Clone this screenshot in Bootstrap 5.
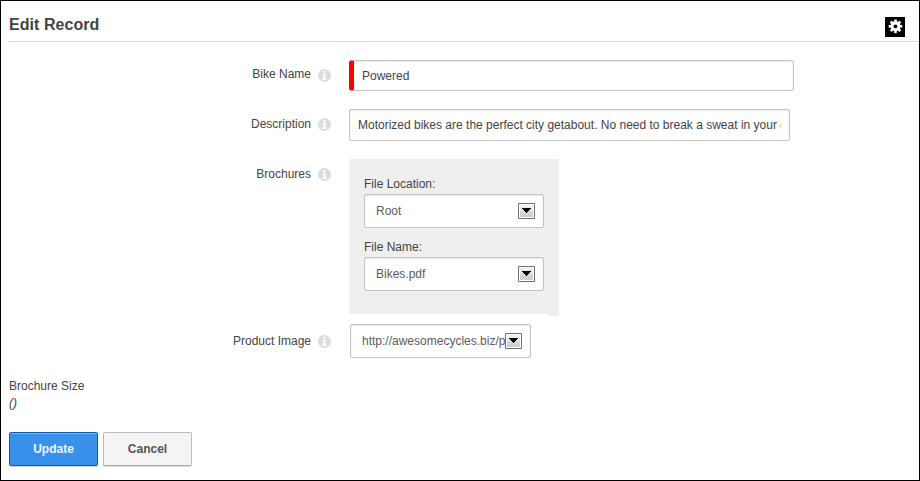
<!DOCTYPE html>
<html lang="en">
<head>
<meta charset="utf-8">
<meta name="viewport" content="width=device-width, initial-scale=1">
<title>Edit Record</title>
<link href="https://cdn.jsdelivr.net/npm/bootstrap@5.3.0/dist/css/bootstrap.min.css" rel="stylesheet">
<style>
body{font:12px/18px "Liberation Sans",Arial,sans-serif;color:#444;background:#fff}
.page-frame{width:920px;height:481px;border:1px solid #000;padding-left:8px;overflow:hidden}
.page-head{height:41px;border-bottom:1px solid #dcdcdc;padding-right:14px}
.page-head h1{font-size:16px;line-height:20px;font-weight:700;padding-top:14px;color:#444;letter-spacing:.05px}
.gear-btn{width:20px;height:20px;background:#000;border:0;margin-top:16px}
.field-label{width:302px;line-height:18px;padding-top:6px;text-align:right}
.first-row .field-label{padding-top:5px}
.image-row .field-label{padding-top:8px}
.info-dot{width:13px;height:13px;margin:9px 18px 0 7px;flex:none}
.image-row .info-dot{margin-top:11px}
.form-row{height:32px;margin-bottom:18px}
.form-row.first-row{margin-top:18px;height:31px}
.form-control.field-input{font-size:12px;line-height:18px;color:#444;border:1px solid #c4c4c4;border-radius:2px;height:32px;padding:0 8px;box-shadow:inset 0 1px 2px #e8e8e8}
.form-control.name-input{width:445px;height:31px;border-left:5px solid #f00;border-radius:3px}
.form-control.desc-input{width:441px}
.file-panel{width:210px;height:155px;background:#efefef;padding:16px 15px 0}
.file-name{margin-top:10px}
.panel-tail{width:11px;height:2px;background:#efefef;margin-left:199px}
.pick{width:180px;height:34px;background:#fff;border:1px solid #c4c4c4;border-radius:2px;padding:0 8px 0 11px;color:#5c5c5c;box-shadow:inset 0 1px 2px #e8e8e8}
.file-panel .pick{margin-top:1px}
.pick-text{flex:1;min-width:0;overflow:hidden;white-space:nowrap}
.pick-arrow{width:17px;height:16px;flex:none}
.image-pick{width:181px;margin-left:1px}
.size-block{padding-top:19px}
.size-block em{line-height:17px}
.actions{gap:5px;padding-top:20px}
.act-btn.btn{width:89px;height:34px;font-size:12px;font-weight:700;line-height:18px;padding:0;border-radius:2px}
.btn.update-btn{background:#3892ec;border:1px solid #16599f;color:#eef5fd;box-shadow:inset 0 1px #70b3f4,0 1px #d5d5d5}
.btn.cancel-btn{background:#f4f4f4;border:1px solid #bdbdbd;border-bottom-color:#a8a8a8;color:#555;box-shadow:0 1px #dedede}
</style>
<script src="https://cdn.jsdelivr.net/npm/bootstrap@5.3.0/dist/js/bootstrap.bundle.min.js"></script>
</head>
<body>
<svg class="position-absolute" width="0" height="0" aria-hidden="true">
  <defs><linearGradient id="face" x2="0" y2="1"><stop stop-color="#f2f2f2"/><stop offset=".5" stop-color="#e6e6e6"/><stop offset=".55" stop-color="#d6d6d6"/><stop offset="1" stop-color="#cecece"/></linearGradient></defs>
  <symbol id="info" viewBox="0 0 13 13"><circle cx="6.5" cy="6.5" r="6.5" fill="#dcdcdc"/><path fill="#fff" d="M5.4 2h2.2v2H5.4zM4.4 5h3.2v4.6h1V11H4.4V9.600h1V6.300h-1z"/></symbol>
  <symbol id="arrow" viewBox="0 0 17 16"><path fill="#fff" stroke="#707070" d="M.5.5h16v15H.5z"/><path fill="url(#face)" d="M2 2h13v12H2z"/><path d="M4 5h9v1h-1v1h-1v1h-1v1H9v1H8V9H7V8H6V7H5V6H4z"/></symbol>
</svg>
<main class="page-frame">
  <header class="page-head d-flex justify-content-between align-items-start">
    <h1 class="m-0">Edit Record</h1>
    <button class="gear-btn p-0 d-flex" type="button" aria-label="Settings">
      <svg width="20" height="20" viewBox="0 0 20 20"><g fill="#fff" transform="translate(10.5 9.300)"><circle r="5"/><path d="M-1.300-6.800h2.600v13.600h-2.600z"/><path d="M-1.300-6.800h2.600v13.600h-2.600z" transform="rotate(45)"/><path d="M-1.300-6.800h2.600v13.600h-2.600z" transform="rotate(90)"/><path d="M-1.300-6.800h2.600v13.600h-2.600z" transform="rotate(135)"/><circle r="1.900" fill="#000"/></g></svg>
    </button>
  </header>
  <form>
    <div class="form-row first-row d-flex align-items-start">
      <label class="field-label" for="bike">Bike Name</label><svg class="info-dot"><use href="#info"/></svg>
      <input id="bike" class="form-control field-input name-input" value="Powered">
    </div>
    <div class="form-row d-flex align-items-start">
      <label class="field-label" for="desc">Description</label><svg class="info-dot"><use href="#info"/></svg>
      <input id="desc" class="form-control field-input desc-input" value="Motorized bikes are the perfect city getabout. No need to break a sweat in your commute">
    </div>
    <div class="d-flex align-items-start mb-2">
      <span class="field-label">Brochures</span><svg class="info-dot"><use href="#info"/></svg>
      <div>
        <div class="file-panel">
          <div>File Location:</div>
          <div class="pick d-flex align-items-center"><span class="pick-text">Root</span><svg class="pick-arrow"><use href="#arrow"/></svg></div>
          <div class="file-name">File Name:</div>
          <div class="pick d-flex align-items-center"><span class="pick-text">Bikes.pdf</span><svg class="pick-arrow"><use href="#arrow"/></svg></div>
        </div>
        <div class="panel-tail"></div>
      </div>
    </div>
    <div class="d-flex align-items-start image-row">
      <span class="field-label">Product Image</span><svg class="info-dot"><use href="#info"/></svg>
      <div class="pick image-pick d-flex align-items-center"><span class="pick-text">http://awesomecycles.biz/p</span><svg class="pick-arrow"><use href="#arrow"/></svg></div>
    </div>
    <div class="size-block">
      <div>Brochure Size</div>
      <em class="d-block">()</em>
    </div>
    <div class="d-flex actions">
      <button type="button" class="btn act-btn update-btn">Update</button>
      <button type="button" class="btn act-btn cancel-btn">Cancel</button>
    </div>
  </form>
</main>
</body>
</html>
